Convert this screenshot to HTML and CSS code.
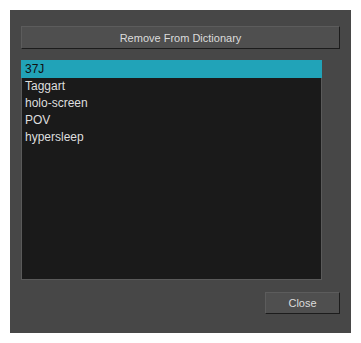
FILE: index.html
```html
<!DOCTYPE html>
<html lang="en">
<head>
    <meta charset="UTF-8">
    <title>Dictionary</title>
    <link rel="stylesheet" href="styles.css">
</head>
<body>

    <div class="dialog">
        <button class="btn btn-wide">Remove From Dictionary</button>

        <ul class="word-list">
            <li class="selected">37J</li>
            <li>Taggart</li>
            <li>holo-screen</li>
            <li>POV</li>
            <li>hypersleep</li>
        </ul>

        <div class="footer">
            <button class="btn btn-close">Close</button>
        </div>
    </div>

</body>
</html>
```

FILE: styles.css
```css
/* General */
body {
    margin: 0;
    padding: 10px;
    background: #fff;
    font-family: 'Liberation Sans', Arial, sans-serif;
    font-size: 11px;
}

/* Dialog panel */
.dialog {
    width: 341px;
    height: 323px;
    box-sizing: border-box;
    background: #474747;
    padding: 16px 11px 0 11px;
    display: flex;
    flex-direction: column;
}

/* Buttons */
.btn {
    background: #4f4f4f;
    color: #dcdcdc;
    font-family: inherit;
    font-size: 11px;
    border: 1px solid #5c5c5c;
    border-right-color: #1c1c1c;
    border-bottom-color: #1c1c1c;
    box-sizing: border-box;
    padding: 0;
}

.btn-wide {
    width: 319px;
    height: 23px;
}

.btn-close {
    width: 75px;
    height: 22px;
}

/* Word list */
.word-list {
    list-style: none;
    margin: 11px 0 0 0;
    padding: 0;
    width: 301px;
    height: 220px;
    box-sizing: border-box;
    background: #1a1a1a;
    border: 1px solid #5a5a5a;
    border-top: none;
}

.word-list li {
    height: 17px;
    line-height: 17px;
    padding-left: 3px;
    color: #dedede;
    font-size: 12px;
}

.word-list li.selected {
    height: 18px;
    line-height: 18px;
    background: #21a3b8;
    color: #101010;
    margin: 0 -1px;
    padding-left: 4px;
}

/* Footer */
.footer {
    display: flex;
    justify-content: flex-end;
    margin-top: 12px;
}
```
